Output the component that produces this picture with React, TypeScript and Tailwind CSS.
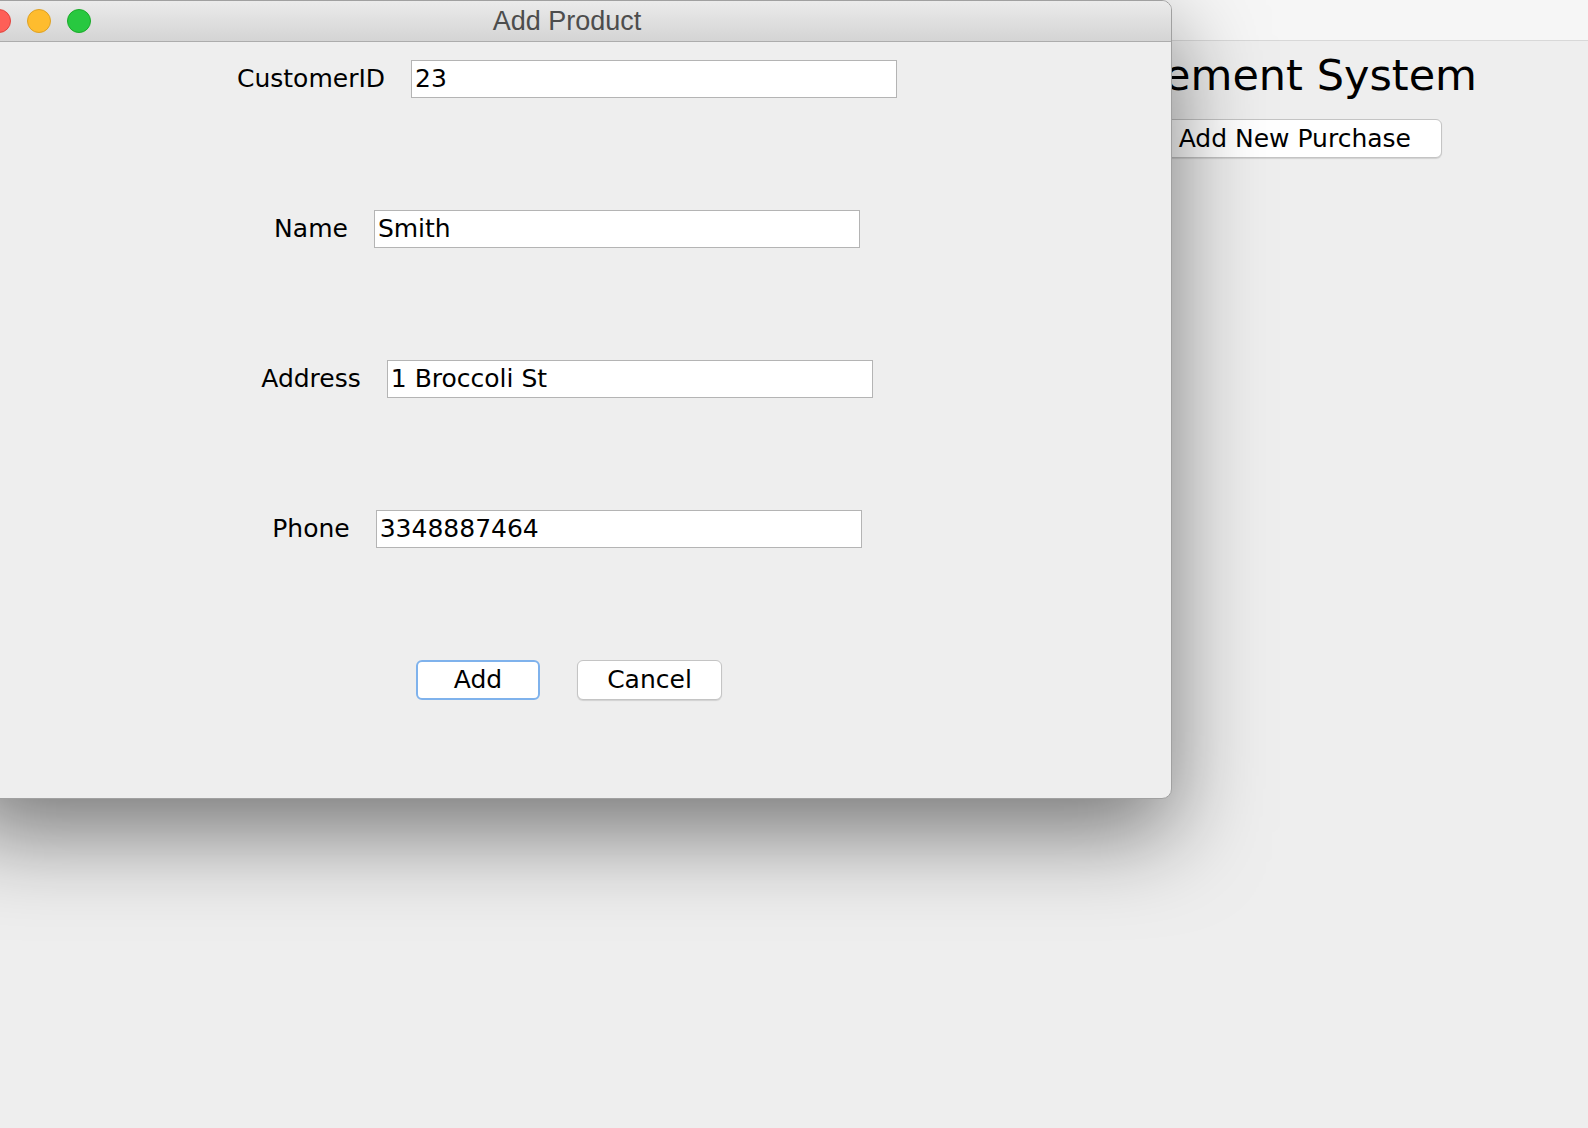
const fields = [
  { label: 'CustomerID', value: '23' },
  { label: 'Name', value: 'Smith' },
  { label: 'Address', value: '1 Broccoli St' },
  { label: 'Phone', value: '3348887464' },
]

function TrafficLights() {
  return (
    <div className="flex items-center gap-[16px] pl-[24px]">
      <span className="h-[24px] w-[24px] rounded-full border border-[#e0443e] bg-[#fe5f57]" />
      <span className="h-[24px] w-[24px] rounded-full border border-[#dea123] bg-[#febc2e]" />
      <span className="h-[24px] w-[24px] rounded-full border border-[#1aab29] bg-[#28c840]" />
    </div>
  )
}

function AddProductDialog() {
  return (
    <div className="absolute left-[-38px] top-0 flex h-[799px] w-[1210px] flex-col overflow-hidden rounded-[10px] border border-[#a0a0a0] bg-[#eeeeee] shadow-[0_34px_90px_rgba(0,0,0,0.5)]">
      <div className="relative flex h-[41px] shrink-0 items-center border-b border-[#acacac] bg-gradient-to-b from-[#ebebeb] to-[#d4d4d4]">
        <TrafficLights />
        <p className="absolute inset-x-0 top-0 flex h-[40px] items-center justify-center font-['Liberation_Sans',sans-serif] text-[27px] text-[#4d4d4d]">
          Add Product
        </p>
      </div>

      <div className="flex flex-col items-center gap-[112px] pt-[18px]">
        {fields.map((f) => (
          <div key={f.label} className="flex h-[38px] items-center gap-[26px]">
            <span className="text-[25px] text-black">{f.label}</span>
            <div className="flex h-[38px] w-[486px] items-center border border-[#b4b4b4] bg-white pl-[3px] text-[25px] text-black">
              {f.value}
            </div>
          </div>
        ))}

        <div className="ml-[4px] flex items-center gap-[37px]">
          <button className="flex h-[40px] w-[124px] items-center justify-center rounded-[6px] border-2 border-[#7fb2ec] bg-white text-[25px] text-black">
            Add
          </button>
          <button className="flex h-[40px] w-[145px] items-center justify-center rounded-[6px] border border-[#c4c4c4] bg-white text-[25px] text-black shadow-[0_1px_1px_rgba(0,0,0,0.12)]">
            Cancel
          </button>
        </div>
      </div>
    </div>
  )
}

export default function App() {
  return (
    <div className="relative h-[1128px] w-full overflow-hidden bg-[#eeeeee] font-['DejaVu_Sans',sans-serif]">
      {/* main window behind the dialog */}
      <div className="h-[41px] border-b border-[#d8d8d8] bg-[#f6f6f6]" />
      <div className="flex flex-col items-end">
        <h1 className="mt-[9px] pr-[111px] text-[43px] leading-[50px] font-normal text-black">
          Purchase Management System
        </h1>
        <button className="mr-[146px] mt-[19px] flex h-[39px] items-center rounded-[6px] border border-[#c4c4c4] bg-white px-[30px] text-[25px] text-black shadow-[0_1px_1px_rgba(0,0,0,0.12)]">
          Add New Purchase
        </button>
      </div>

      <AddProductDialog />
    </div>
  )
}
